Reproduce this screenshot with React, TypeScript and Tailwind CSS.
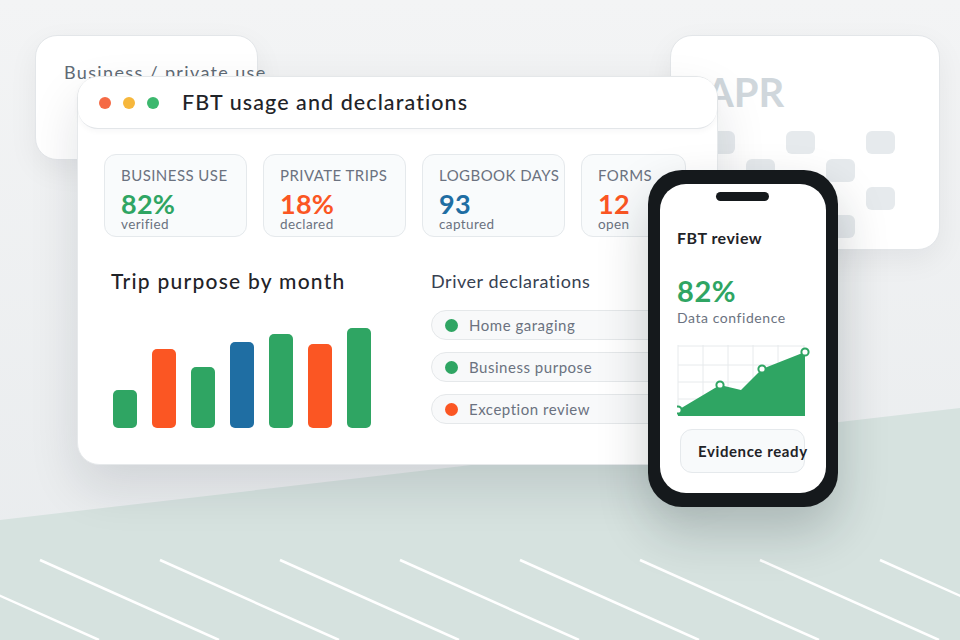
import React from 'react';

const font = { fontFamily: '"Lato", "Noto Sans", sans-serif' };

const bars = [
  { h: 38, c: 'bg-[#2fa563]' },
  { h: 79, c: 'bg-[#fb5623]' },
  { h: 61, c: 'bg-[#2fa563]' },
  { h: 86, c: 'bg-[#1f6ea3]' },
  { h: 94, c: 'bg-[#2fa563]' },
  { h: 84, c: 'bg-[#fb5623]' },
  { h: 100, c: 'bg-[#2fa563]' },
];

const stats = [
  { label: 'BUSINESS USE', value: '82%', sub: 'verified', color: 'text-[#2fa563]', w: 'w-[143px]' },
  { label: 'PRIVATE TRIPS', value: '18%', sub: 'declared', color: 'text-[#fb5623]', w: 'w-[143px]' },
  { label: 'LOGBOOK DAYS', value: '93', sub: 'captured', color: 'text-[#1f6ea3]', w: 'w-[143px]' },
  { label: 'FORMS', value: '12', sub: 'open', color: 'text-[#fb5623]', w: 'w-[105px]' },
];

const declarations = [
  { label: 'Home garaging', dot: 'bg-[#2fa563]' },
  { label: 'Business purpose', dot: 'bg-[#2fa563]' },
  { label: 'Exception review', dot: 'bg-[#fb5623]' },
];

// checkerboard of day cells on the calendar card
const cells = Array.from({ length: 20 }, (_, i) => (Math.floor(i / 5) + (i % 5)) % 2 === 0);

const Backdrop: React.FC = () => (
  <svg className="absolute inset-0" width={960} height={640} viewBox="0 0 960 640">
    <defs>
      <linearGradient id="bg" x1="0" y1="0" x2="0" y2="1">
        <stop offset="0" stopColor="#f3f4f5" />
        <stop offset="1" stopColor="#e8ebed" />
      </linearGradient>
    </defs>
    <rect width={960} height={640} fill="url(#bg)" />
    <polygon points="0,520 960,408 960,640 0,640" fill="#d6e2df" />
    {[-80, 40, 160, 280, 400, 520, 640, 760, 880].map((x) => (
      <line key={x} x1={x} y1={560} x2={x + 179} y2={640} stroke="#ffffff" strokeWidth={2.5} />
    ))}
  </svg>
);

const StatCard: React.FC<(typeof stats)[number]> = ({ label, value, sub, color, w }) => (
  <div className={`${w} h-[83px] shrink-0 rounded-xl border border-[#e5e9ec] bg-[#f9fbfc] pl-4 pt-[10px]`}>
    <div className="text-[15px] leading-5 text-[#6b7280] tracking-[0.03em]">{label}</div>
    <div className={`mt-[7px] text-[27px] font-bold leading-[24px] tracking-[0.01em] ${color}`}>{value}</div>
    <div className="mt-[1px] text-[13.5px] leading-[14px] text-[#6b7280] tracking-[0.03em]">{sub}</div>
  </div>
);

const Phone: React.FC = () => (
  <div className="absolute left-[648px] top-[170px] h-[337px] w-[190px] rounded-[34px] bg-[#15191c] p-[12px] pt-[14px] pb-[14px] shadow-[0_24px_50px_rgba(20,30,35,0.22)]">
    <div className="relative h-full w-full rounded-[26px] bg-white pl-[17px] pt-[44px]">
      <div className="absolute left-[56px] top-[8px] h-[9px] w-[53px] rounded-full bg-[#15191c]" />
      <div className="text-[16px] font-bold leading-5 tracking-[0.03em] text-[#1f2328]">FBT review</div>
      <div className="mt-[27px] text-[29px] font-bold leading-8 tracking-[0.02em] text-[#2fa563]">82%</div>
      <div className="mt-[1px] text-[14px] leading-5 tracking-[0.04em] text-[#6b7280]">Data confidence</div>
      <svg className="mt-[17px]" width={134} height={76} viewBox="0 0 134 76">
        {[1, 26, 51, 76, 101, 127].map((x) => (
          <line key={x} x1={x} y1={0} x2={x} y2={71} stroke="#e7eaec" strokeWidth={1} />
        ))}
        {[1, 20, 37, 54].map((y) => (
          <line key={y} x1={1} y1={y} x2={127} y2={y} stroke="#e7eaec" strokeWidth={1} />
        ))}
        <path d="M1,65 L43,40 L64,45 L85,24 L128,7 L128,71 L1,71 Z" fill="#2fa563" />
        {[
          [1, 65],
          [43, 40],
          [85, 24],
          [128, 7],
        ].map(([x, y]) => (
          <circle key={x} cx={x} cy={y} r={3.6} fill="#ffffff" stroke="#2fa563" strokeWidth={2} />
        ))}
      </svg>
      <div className="ml-[3px] mt-[8px] flex h-[44px] w-[125px] items-center rounded-xl border border-[#e5e9ec] bg-[#f8fafb] pl-[17px]">
        <span className="whitespace-nowrap text-[15px] font-bold tracking-[0.04em] text-[#1f2328]">Evidence ready</span>
      </div>
    </div>
  </div>
);

export default function App() {
  return (
    <div className="relative h-[640px] w-[960px] overflow-hidden" style={font}>
      <Backdrop />

      {/* back card: business / private */}
      <div className="absolute left-[35px] top-[35px] h-[125px] w-[223px] rounded-[22px] border border-[#e3e6e9] bg-white pl-[28px] pt-[24px] shadow-[0_10px_30px_rgba(15,23,42,0.06)]">
        <div className="whitespace-nowrap text-[18px] leading-6 tracking-[0.075em] text-[#5f6b76]">Business / private use</div>
      </div>

      {/* back card: calendar */}
      <div className="absolute left-[670px] top-[35px] h-[215px] w-[270px] rounded-[22px] border border-[#e3e6e9] bg-white pl-[35px] pt-[34px] shadow-[0_10px_30px_rgba(15,23,42,0.06)]">
        <div className="text-[40px] font-bold leading-[44px] text-[#d0d7dc]">APR</div>
        <div className="mt-[17px] grid w-[189px] grid-cols-5 gap-x-[11px] gap-y-[5px]">
          {cells.map((on, i) => (
            <div key={i} className={`h-[23px] w-[29px] rounded-md ${on ? 'bg-[#e6eaed]' : ''}`} />
          ))}
        </div>
      </div>

      {/* main window */}
      <div className="absolute left-[77px] top-[76px] h-[389px] w-[641px] rounded-[22px] border border-[#e6e9eb] bg-white shadow-[0_22px_50px_rgba(15,23,42,0.12)]">
        <div className="flex h-[52px] items-center rounded-[20px] border-b border-[#e3e6e9] bg-white pl-[21px] shadow-[0_2px_6px_rgba(15,23,42,0.04)]">
          <div className="flex gap-3">
            <span className="h-3 w-3 rounded-full bg-[#f56a45]" />
            <span className="h-3 w-3 rounded-full bg-[#f6b73c]" />
            <span className="h-3 w-3 rounded-full bg-[#3cb86e]" />
          </div>
          <div className="ml-[23px] text-[21.5px] font-medium tracking-[0.05em] text-[#1f2328]">FBT usage and declarations</div>
        </div>

        <div className="mt-[25px] flex gap-4 pl-[26px]">
          {stats.map((s) => (
            <StatCard key={s.label} {...s} />
          ))}
        </div>

        <div className="mt-[32px] flex">
          <div className="w-[320px] pl-[33px]">
            <div className="whitespace-nowrap text-[21px] font-medium leading-6 tracking-[0.06em] text-[#1f2328]">Trip purpose by month</div>
            <div className="mt-[35px] flex h-[100px] items-end gap-[15px] pl-[2px]">
              {bars.map((b, i) => (
                <div key={i} className={`w-[24px] rounded-[5px] ${b.c}`} style={{ height: b.h }} />
              ))}
            </div>
          </div>
          <div className="pl-[33px]">
            <div className="text-[18px] leading-6 tracking-[0.03em] text-[#374151]">Driver declarations</div>
            <div className="mt-[17px] flex flex-col gap-3">
              {declarations.map((d) => (
                <div
                  key={d.label}
                  className="flex h-[30px] w-[240px] items-center rounded-full border border-[#e5e8ea] bg-[#f8f9fa] pl-[13px]"
                >
                  <span className={`h-[13px] w-[13px] rounded-full ${d.dot}`} />
                  <span className="ml-[11px] text-[15px] tracking-[0.035em] text-[#6b7280]">{d.label}</span>
                </div>
              ))}
            </div>
          </div>
        </div>
      </div>

      <Phone />
    </div>
  );
}
